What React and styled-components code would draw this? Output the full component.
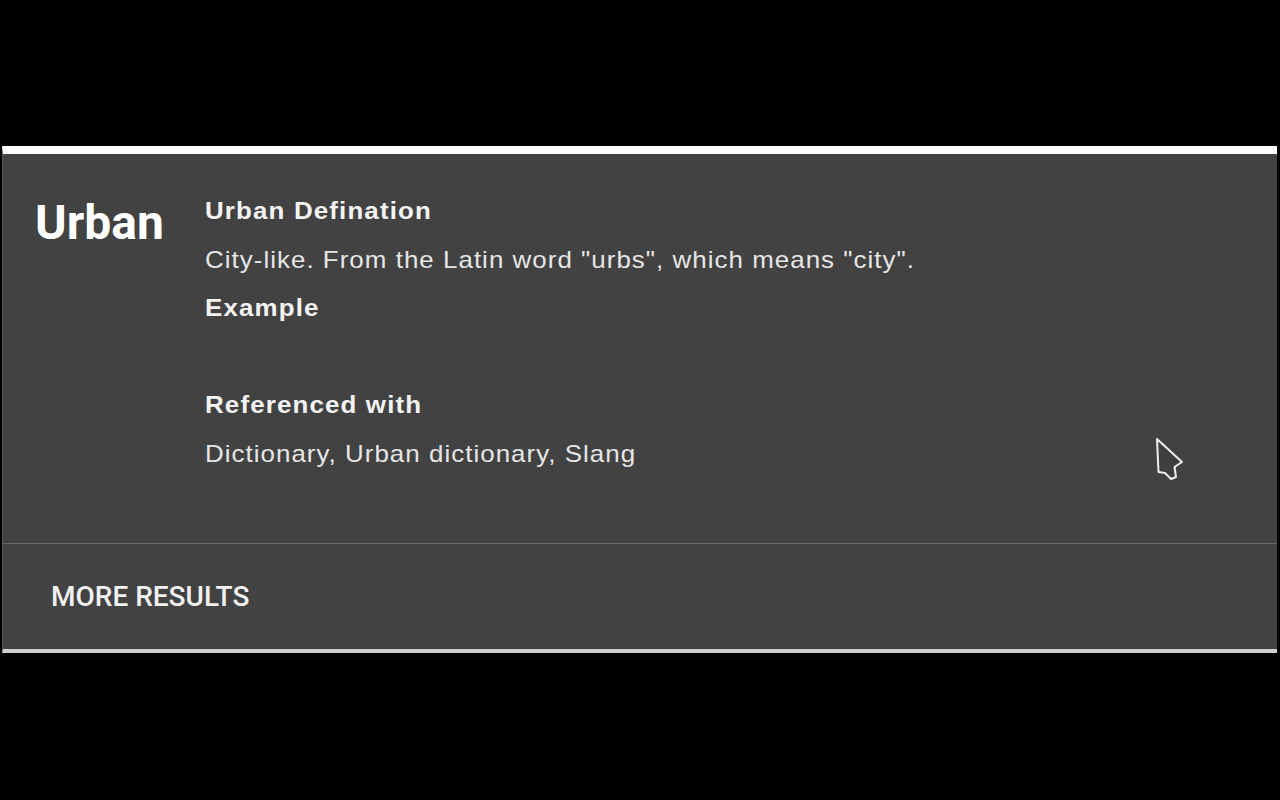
import React from "react";
import styled, { createGlobalStyle } from "styled-components";

const Global = createGlobalStyle`
  html, body { margin: 0; padding: 0; background: #000; }
  body { width: 1280px; height: 800px; overflow: hidden; }
`;

const Page = styled.div`
  position: relative;
  width: 1280px;
  height: 800px;
  padding: 146px 3px 0 2px;
  box-sizing: border-box;
`;

const Frame = styled.div`
  background: #424242;
  border-top: 8px solid #ffffff;
  border-bottom: 4px solid #cfcfcf;
  border-left: 1px solid #5a5a5a;
`;

const Body = styled.div`
  display: flex;
  padding: 33px 0 65px 32px;
  border-bottom: 1px solid #686868;
`;

const Word = styled.h1`
  margin: 12px 0 0 0;
  width: 170px;
  font-family: Roboto, "Liberation Sans", sans-serif;
  font-weight: 700;
  font-size: 48px;
  line-height: 48px;
  color: #ffffff;
`;

const Details = styled.div`
  display: flex;
  flex-direction: column;
`;

const Line = styled.div`
  font-family: "Liberation Sans", Arial, sans-serif;
  font-size: 24px;
  line-height: 48.5px;
  height: 48.5px;
  font-weight: ${(p) => (p.$bold ? 700 : 400)};
  letter-spacing: ${(p) => (p.$bold ? "1.05px" : "0.95px")};
  color: ${(p) => (p.$bold ? "#f4f4f4" : "#e6e6e6")};
  white-space: nowrap;
  transform: scaleX(1.08);
  transform-origin: left center;
`;

const Footer = styled.div`
  display: flex;
  align-items: center;
  height: 105px;
  padding-left: 48px;
`;

const MoreButton = styled.button`
  background: none;
  border: none;
  padding: 0;
  font-family: Roboto, "Liberation Sans", sans-serif;
  font-weight: 500;
  font-size: 28px;
  line-height: 32px;
  color: #f2f2f2;
  text-transform: uppercase;
  cursor: pointer;
`;

const Cursor = styled.svg`
  position: absolute;
  left: 1154px;
  top: 436px;
`;

export default function App() {
  return (
    <>
      <Global />
      <Page>
        <Frame>
          <Body>
            <Word>Urban</Word>
            <Details>
              <Line $bold>Urban Defination</Line>
              <Line>City-like. From the Latin word "urbs", which means "city".</Line>
              <Line $bold>Example</Line>
              <Line />
              <Line $bold>Referenced with</Line>
              <Line>Dictionary, Urban dictionary, Slang</Line>
            </Details>
          </Body>
          <Footer>
            <MoreButton>More results</MoreButton>
          </Footer>
        </Frame>
        <Cursor width="32" height="48" viewBox="0 0 32 48">
          <polygon
            points="3,3 4.5,36 11,37 17,43 22,41 20.5,31 28,26"
            fill="#3e3e3e"
            stroke="#f0f0f0"
            strokeWidth="2"
            strokeLinejoin="round"
          />
        </Cursor>
      </Page>
    </>
  );
}
